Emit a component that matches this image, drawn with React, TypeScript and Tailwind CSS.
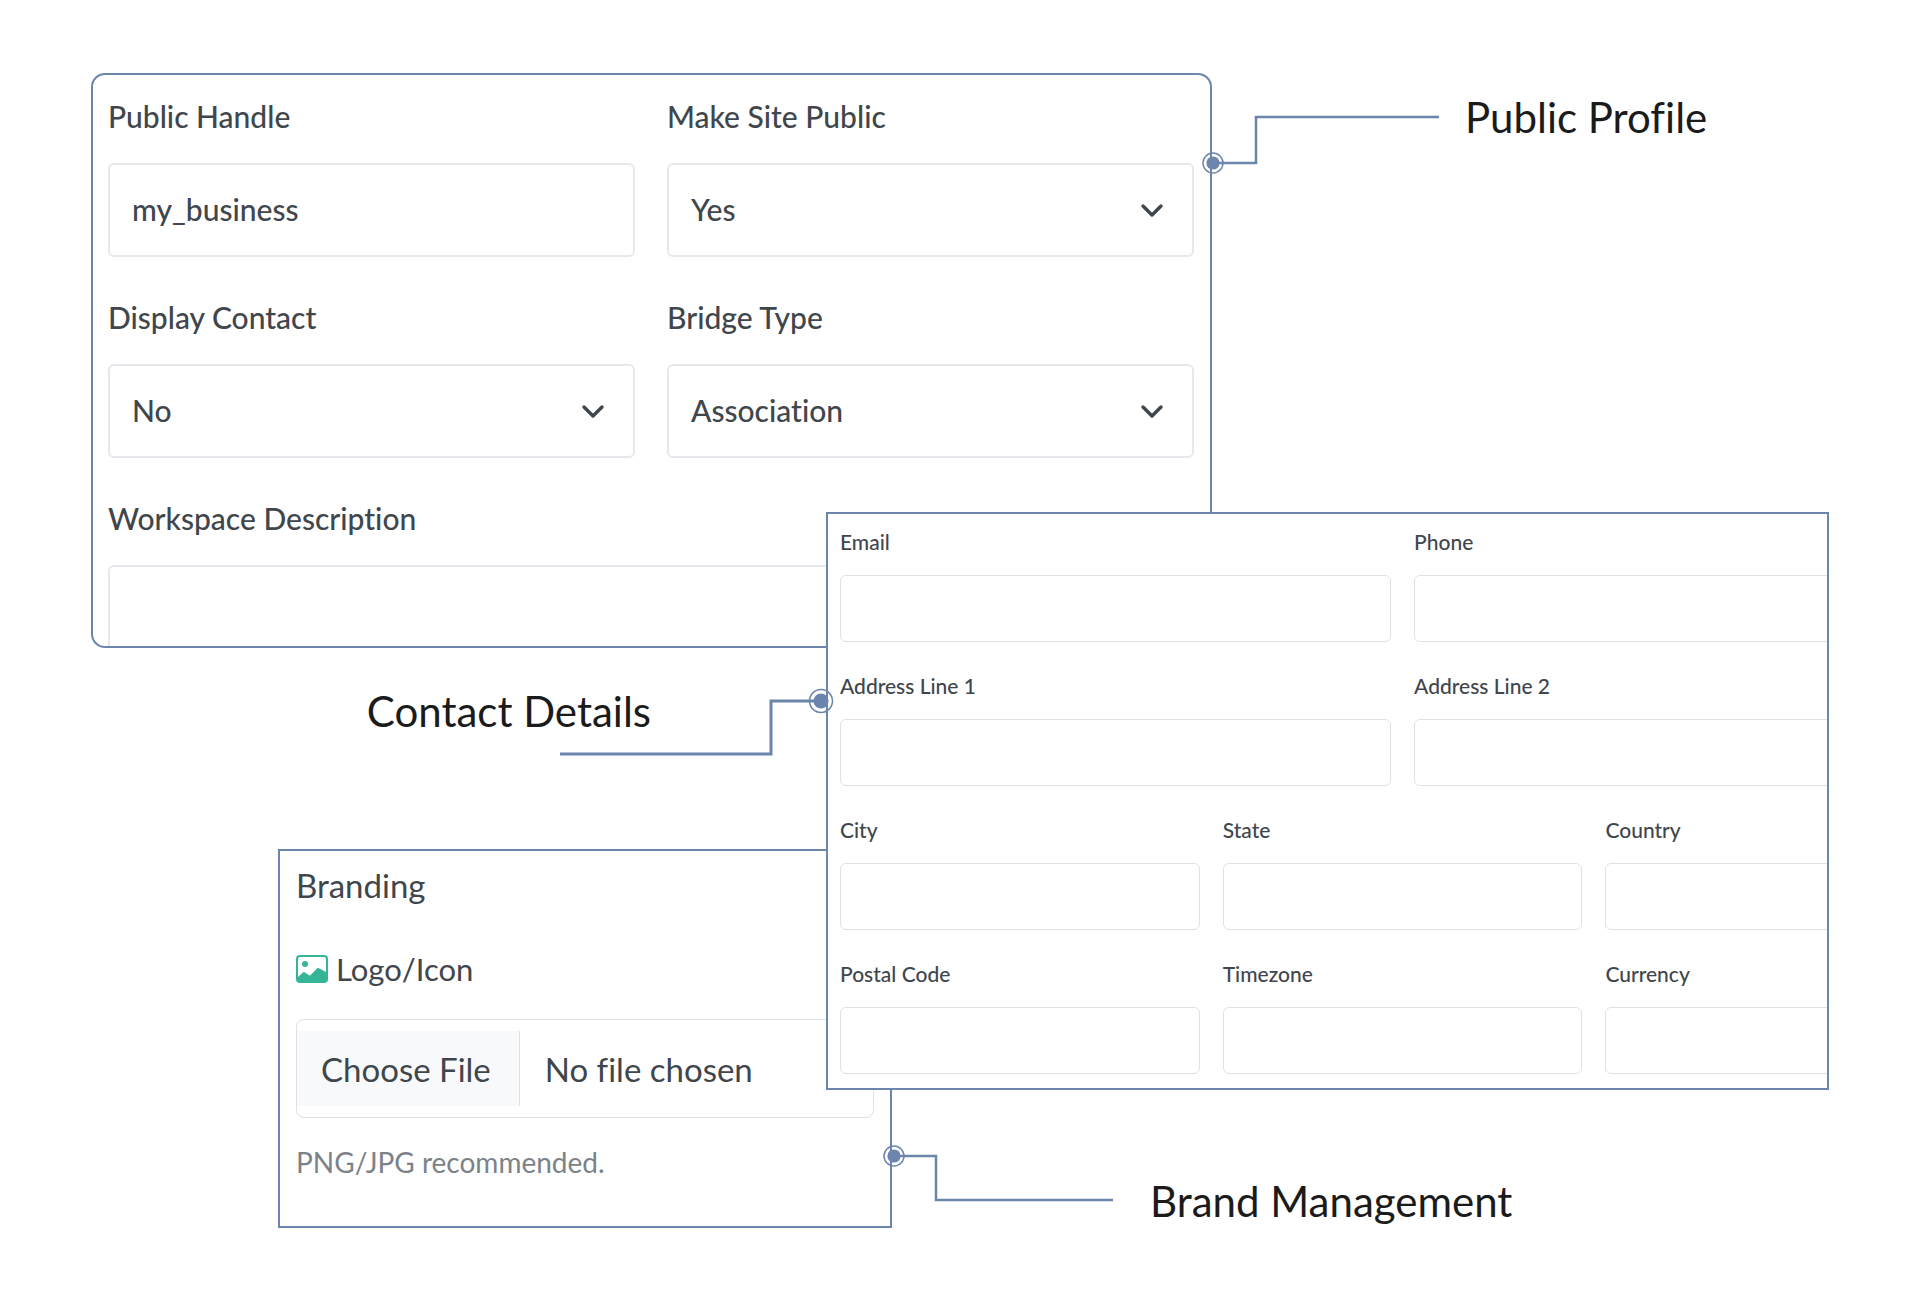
import { useId } from "react";
import type { ReactNode } from "react";
import { BsImage } from "react-icons/bs";

interface CalloutProps {
  children: ReactNode;
  className?: string;
}

interface ConnectorProps {
  width: number;
  height: number;
  path: string;
  cx: number;
  cy: number;
  radius?: number;
  stroke?: number;
  className?: string;
}

interface ProfileSelectProps {
  label: string;
  options: string[];
}

const profileLabel = "mb-[26px] block text-[30px] leading-[42px] font-medium";
const profileField =
  "block h-[94px] w-full rounded-md border-2 border-[#e5e9ed] bg-white px-[22px] pb-[2px] text-[30px] font-medium";

const Callout = ({ children, className = "" }: CalloutProps) => (
  <h2
    className={`shrink-0 whitespace-nowrap text-[42px] leading-[48px] text-[#1b1b1b] ${className}`}
  >
    {children}
  </h2>
);

const Connector = ({
  width,
  height,
  path,
  cx,
  cy,
  radius = 10,
  stroke = 2.5,
  className = "",
}: ConnectorProps) => (
  <svg
    width={width}
    height={height}
    fill="none"
    stroke="#6c85ac"
    aria-hidden="true"
    className={`relative z-10 shrink-0 ${className}`}
  >
    <path d={path} strokeWidth={stroke} />
    <circle cx={cx} cy={cy} r={radius} strokeWidth="1.5" />
    <circle cx={cx} cy={cy} r={radius * 0.66} fill="#6c85ac" stroke="none" />
  </svg>
);

const ProfileSelect = ({ label, options }: ProfileSelectProps) => {
  const id = useId();

  return (
    <div>
      <label htmlFor={id} className={profileLabel}>
        {label}
      </label>
      <div className="relative">
        <select id={id} className={`appearance-none ${profileField}`}>
          {options.map((option) => (
            <option key={option}>{option}</option>
          ))}
        </select>
        <svg
          width="24"
          height="16"
          viewBox="0 0 24 16"
          fill="none"
          stroke="#3f464c"
          strokeWidth="3.4"
          strokeLinecap="round"
          strokeLinejoin="round"
          className="pointer-events-none absolute top-10 right-[30px]"
        >
          <path d="M3 3l9 9 9-9" />
        </svg>
      </div>
    </div>
  );
};

const ContactField = ({ label }: { label: string }) => {
  const id = useId();

  return (
    <div>
      <label
        htmlFor={id}
        className="mb-[17px] block text-[21px] leading-[32px] font-medium"
      >
        {label}
      </label>
      <input
        id={id}
        type="text"
        className="block h-[67px] w-full rounded-md border border-[#dee2e6] px-4 text-[21px]"
      />
    </div>
  );
};

const PublicProfile = () => (
  <div className="h-[575px] overflow-hidden rounded-[14px] border-2 border-[#6c85ac] bg-white pt-5 pr-4 pl-[15px]">
    <div className="grid grid-cols-2 gap-x-8 gap-y-[39px]">
      <div>
        <label htmlFor="handle" className={profileLabel}>
          Public Handle
        </label>
        <input
          id="handle"
          type="text"
          defaultValue="my_business"
          className={profileField}
        />
      </div>
      <ProfileSelect label="Make Site Public" options={["Yes", "No"]} />
      <ProfileSelect label="Display Contact" options={["No", "Yes"]} />
      <ProfileSelect label="Bridge Type" options={["Association", "Company"]} />
      <div className="col-span-2">
        <label htmlFor="description" className={profileLabel}>
          Workspace Description
        </label>
        <textarea
          id="description"
          rows={4}
          className="block w-full resize-none rounded-md border-2 border-[#e5e9ed] px-[22px] py-4 text-[30px]"
        />
      </div>
    </div>
  </div>
);

const ContactDetails = () => (
  <div className="overflow-hidden border-2 border-[#6c85ac] bg-white pt-3 pb-[14px] pl-3">
    {/* wider than the panel, the last column runs out of view */}
    <div className="flex w-[114%] flex-col gap-7">
      <div className="grid grid-cols-2 gap-x-[23px] gap-y-7">
        {["Email", "Phone", "Address Line 1", "Address Line 2"].map((label) => (
          <ContactField key={label} label={label} />
        ))}
      </div>
      <div className="grid grid-cols-3 gap-x-[23px] gap-y-7">
        {["City", "State", "Country", "Postal Code", "Timezone", "Currency"].map(
          (label) => (
            <ContactField key={label} label={label} />
          ),
        )}
      </div>
    </div>
  </div>
);

const Branding = () => (
  <div className="border-2 border-[#6c85ac] bg-white px-4 pt-[14px] pb-11">
    <h3 className="text-[33px] leading-[40px]">Branding</h3>
    <label
      htmlFor="logo"
      className="mt-11 mb-[30px] flex items-center gap-2 text-[31px] leading-[40px]"
    >
      <BsImage size={32} className="text-[#35b597]" />
      Logo/Icon
    </label>
    <input
      id="logo"
      type="file"
      className="block w-full rounded-lg border border-[#dee2e6] py-[11px] text-[33px] leading-[40px] file:mr-[25px] file:h-[75px] file:border-r file:border-[#dee2e6] file:bg-[#f8f9fb] file:pr-7 file:pl-6"
    />
    <p className="mt-6 text-[28px] leading-[40px] text-[#7b8288]">
      PNG/JPG recommended.
    </p>
  </div>
);

const App = () => (
  <main className="min-h-screen overflow-hidden bg-white pt-[73px] pb-[72px] font-[Lato,sans-serif] text-[#3f464c] [font-variant-ligatures:none]">
    <section className="grid grid-cols-[91fr_1121fr_708fr]">
      <div className="col-start-2">
        <PublicProfile />
      </div>
      <div className="flex items-start">
        <Connector
          width={240}
          height={72}
          path="M12 59H55V13H238"
          cx={12}
          cy={59}
          className="mt-[31px] -ml-[11px]"
        />
        <Callout className="mt-5 ml-6">Public Profile</Callout>
      </div>
    </section>

    <section className="relative z-10 -mt-[136px] grid grid-cols-[826fr_1003fr_91fr]">
      <div className="flex items-start justify-end">
        <Callout className="mt-[175px]">Contact Details</Callout>
        <Connector
          width={274}
          height={70}
          path="M0 67H211V14H260"
          cx={261}
          cy={14}
          radius={11.5}
          stroke={3}
          className="mt-[175px] -mr-2 -ml-[91px]"
        />
      </div>
      <ContactDetails />
    </section>

    <section className="-mt-[241px] grid grid-cols-[278fr_614fr_1028fr]">
      <div className="col-start-2">
        <Branding />
      </div>
      <div className="flex items-start">
        <Connector
          width={232}
          height={60}
          path="M12 12H54V56H231"
          cx={12}
          cy={12}
          className="mt-[295px] -ml-[10px]"
        />
        <Callout className="mt-[328px] ml-9">Brand Management</Callout>
      </div>
    </section>
  </main>
);

export default App;
